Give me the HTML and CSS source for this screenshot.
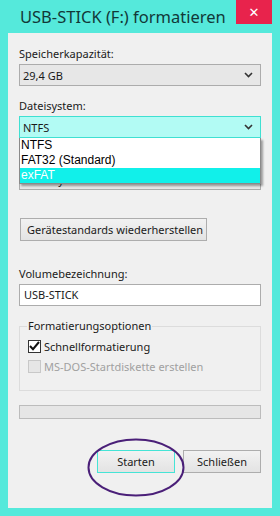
FILE: index.html
```html
<!DOCTYPE html>
<html>

<head>
  <meta charset="UTF-8">
  <title>USB-STICK (F:) formatieren</title>
  <link rel="stylesheet" href="styles.css">
</head>

<body>
  <div class="window">
    <div class="titlebar">
      <span class="title">USB-STICK (F:) formatieren</span>
      <a class="close">&#x2715;</a>
    </div>
    <div class="content">
      <div class="label first">Speicherkapazität:</div>
      <div class="select">
        <span>29,4 GB</span>
        <svg class="chevron" width="9" height="6" viewBox="0 0 9 6"><path d="M1 1l3.5 3.5L8 1" fill="none" stroke="#333" stroke-width="1.6"/></svg>
      </div>

      <div class="label">Dateisystem:</div>
      <div class="dropdown">
        <div class="select focused">
          <span>NTFS</span>
          <svg class="chevron" width="9" height="6" viewBox="0 0 9 6"><path d="M1 1l3.5 3.5L8 1" fill="none" stroke="#333" stroke-width="1.6"/></svg>
        </div>
        <ul class="options">
          <li>NTFS</li>
          <li>FAT32 (Standard)</li>
          <li class="active">exFAT</li>
        </ul>
      </div>

      <!-- covered by the open list -->
      <div class="label covered">Größe der Zuordnungseinheit:</div>
      <div class="select">
        <span>4096 Bytes</span>
        <svg class="chevron" width="9" height="6" viewBox="0 0 9 6"><path d="M1 1l3.5 3.5L8 1" fill="none" stroke="#333" stroke-width="1.6"/></svg>
      </div>

      <button class="button defaults">Gerätestandards wiederherstellen</button>

      <div class="label volume">Volumebezeichnung:</div>
      <div class="input">USB-STICK</div>

      <fieldset class="group">
        <legend>Formatierungsoptionen</legend>
        <label class="check">
          <span class="box checked">
            <svg width="11" height="10" viewBox="0 0 11 10"><path d="M1 5l3 3.2L10 1" fill="none" stroke="#111" stroke-width="2"/></svg>
          </span>
          Schnellformatierung
        </label>
        <label class="check disabled">
          <span class="box"></span>
          MS-DOS-Startdiskette erstellen
        </label>
      </fieldset>

      <div class="progress"></div>

      <div class="actions">
        <div class="start-wrap">
          <button class="button start">Starten</button>
          <svg class="ring" width="98" height="59" viewBox="0 0 98 59"><ellipse cx="49" cy="29.5" rx="47.5" ry="28" fill="none" stroke="#4a1f78" stroke-width="2"/></svg>
        </div>
        <button class="button">Schließen</button>
      </div>
    </div>
  </div>
</body>

</html>
```

FILE: styles.css
```css
html,
body {
  margin: 0;
  height: 100%;
}

body {
  font-family: "Noto Sans", "DejaVu Sans", sans-serif;
  font-size: 11px;
  color: #1a1a1a;
}

.window {
  width: 280px;
  height: 516px;
  padding: 0 8px 8px;
  box-sizing: border-box;
  background-color: #55e9db;
  display: flex;
  flex-direction: column;
}

.titlebar {
  height: 33px;
  display: flex;
  align-items: flex-start;
  flex-shrink: 0;
}

.title {
  padding: 5px 0 0 12px;
  font-size: 16.5px;
  line-height: 24px;
  color: #123838;
  white-space: nowrap;
}

.close {
  margin-left: auto;
  width: 36px;
  height: 24px;
  flex-shrink: 0;
  background-color: #e8234c;
  color: #fff;
  font-size: 13px;
  font-weight: bold;
  line-height: 24px;
  text-align: center;
}

.content {
  flex: 1;
  background-color: #f0f0f0;
  padding: 0 11px;
  display: flex;
  flex-direction: column;
}

.label {
  line-height: 15px;
  margin-top: 12px;
  margin-bottom: 3px;
  white-space: nowrap;
}

.label.first {
  margin-top: 13px;
}

.label.covered {
  visibility: hidden;
}

.select {
  height: 22px;
  flex-shrink: 0;
  box-sizing: border-box;
  border: 1px solid #acacac;
  background-color: #e7e7e7;
  display: flex;
  align-items: center;
  padding: 0 7px 0 3px;
}

.chevron {
  margin-left: auto;
}

.select.focused {
  border-color: #3fe0d2;
  background-color: #b2fbf4;
}

.dropdown {
  position: relative;
}

.options {
  list-style: none;
  margin: 0;
  padding: 0;
  position: absolute;
  top: 22px;
  left: 0;
  right: 0;
  z-index: 2;
  background-color: #fff;
  border: 1px solid #8a8a8a;
  border-top: 0;
  box-shadow: 2px 2px 2px rgba(0, 0, 0, 0.35);
  font-family: "Liberation Sans", Arial, sans-serif;
  font-size: 12px;
}

.options li {
  line-height: 15px;
  padding-left: 1px;
  color: #000;
}

.options li.active {
  background-color: #11f0ea;
  color: #fff;
}

.button {
  font: inherit;
  color: #1a1a1a;
  height: 23px;
  flex-shrink: 0;
  border: 1px solid #adadad;
  background: linear-gradient(#f2f2f2, #e3e3e3);
  padding: 0 6px;
  white-space: nowrap;
}

.button.defaults {
  align-self: flex-start;
  margin: 28px 0 0 1px;
  width: 187px;
}

.label.volume {
  margin-top: 25px;
  margin-bottom: 3px;
}

.input {
  height: 22px;
  flex-shrink: 0;
  box-sizing: border-box;
  border: 1px solid #acacac;
  background-color: #fff;
  line-height: 20px;
  padding-left: 4px;
}

.group {
  margin: 13px 0 0;
  padding: 6px 0 0 8px;
  border: 1px solid #dcdcdc;
  height: 72px;
  flex-shrink: 0;
  box-sizing: border-box;
}

.group legend {
  padding: 0 1px;
  margin-left: -1px;
  line-height: 14px;
}

.check {
  display: flex;
  align-items: center;
  gap: 3px;
  height: 14px;
  margin-bottom: 6px;
  white-space: nowrap;
}

.box {
  width: 13px;
  height: 13px;
  box-sizing: border-box;
  border: 1px solid #333;
  background-color: #fff;
  display: flex;
  align-items: center;
  justify-content: center;
}

.check.disabled {
  color: #a0a0a0;
}

.check.disabled .box {
  border-color: #c8c8c8;
  background-color: #e6e6e6;
}

.progress {
  margin-top: 14px;
  height: 12px;
  flex-shrink: 0;
  border: 1px solid #bcbcbc;
  background-color: #e6e6e6;
}

.actions {
  margin-top: 31px;
  display: flex;
  justify-content: flex-end;
  align-items: flex-start;
  gap: 8px;
}

.actions .button {
  width: 78px;
}

.start-wrap {
  position: relative;
  display: flex;
}

.button.start {
  border-color: #45e4d6;
}

.ring {
  position: absolute;
  left: -10px;
  top: -12px;
}
```
